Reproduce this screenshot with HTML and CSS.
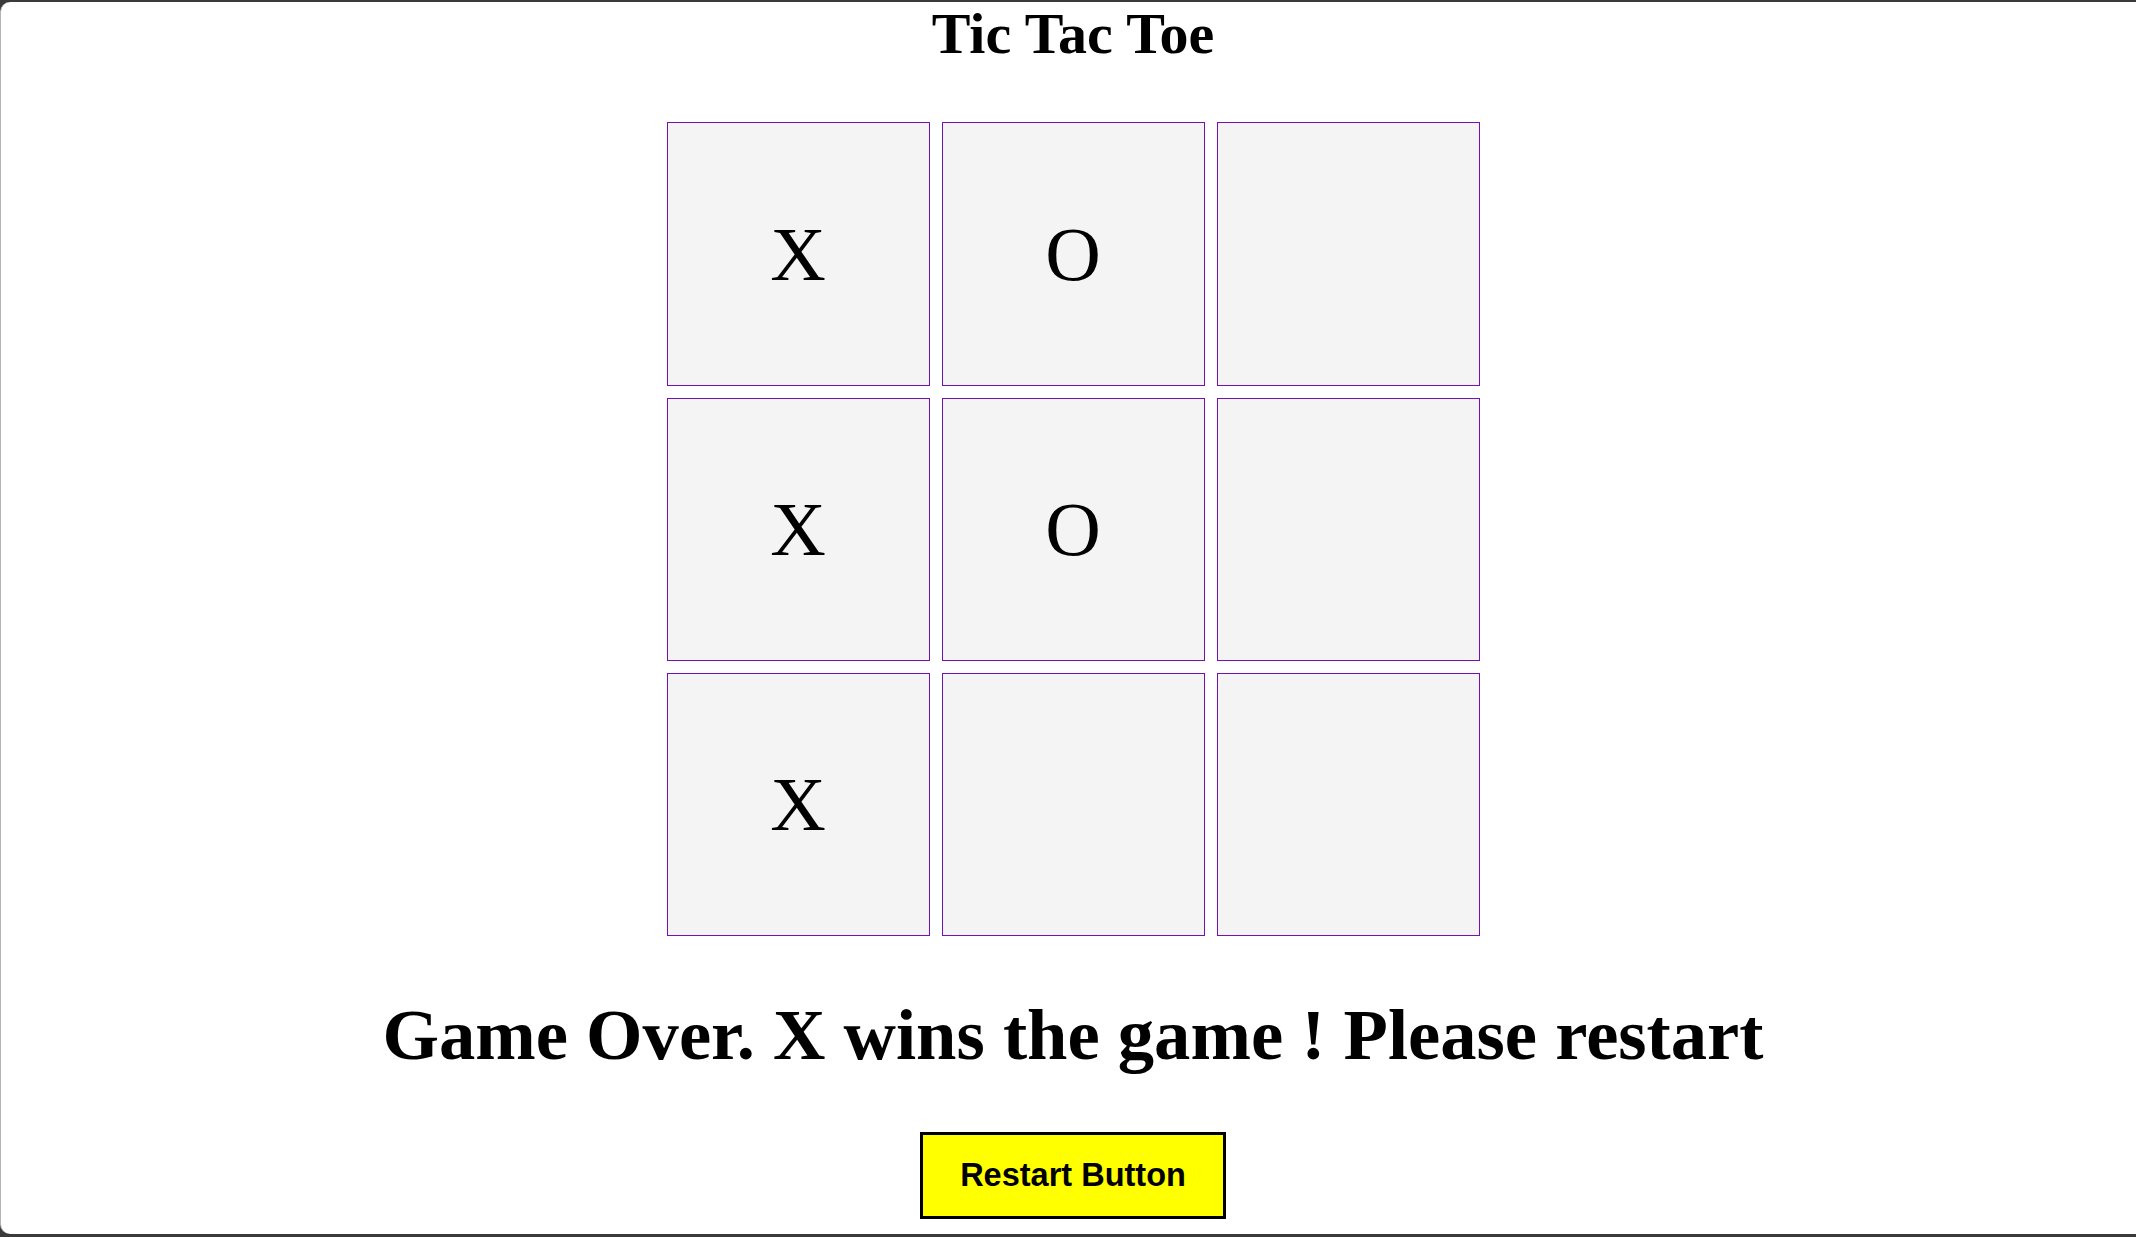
FILE: index.html
```html
<!DOCTYPE html>
<html lang="en">
<head>
<meta charset="utf-8">
<title>Tic Tac Toe</title>
<link rel="stylesheet" href="styles.css">
</head>
<body>
<div class="page">
  <h1 class="title">Tic Tac Toe</h1>
  <div class="board">
    <div class="cell">X</div>
    <div class="cell">O</div>
    <div class="cell"></div>
    <div class="cell">X</div>
    <div class="cell">O</div>
    <div class="cell"></div>
    <div class="cell">X</div>
    <div class="cell"></div>
    <div class="cell"></div>
  </div>
  <h2 class="status">Game Over. X wins the game ! Please restart</h2>
  <button class="restart">Restart Button</button>
</div>
</body>
</html>
```

FILE: styles.css
```css
html {
  background: #3a3a3a;
}
body {
  margin: 0;
  padding: 2px 0 3px 0;
}
.page {
  box-sizing: border-box;
  height: 1232px;
  background: #ffffff;
  border-left: 1px solid #b5b5b5;
  border-radius: 10px 0 0 10px;
  padding-left: 9px;
  display: flex;
  flex-direction: column;
  align-items: center;
  font-family: "Liberation Serif", "Times New Roman", serif;
  color: #000;
}
.title {
  margin: 0;
  font-size: 58px;
  line-height: 63px;
  font-weight: bold;
}
.board {
  margin-top: 57px;
  display: grid;
  grid-template-columns: repeat(3, 263px);
  grid-template-rows: 264px 263px 263px;
  column-gap: 12px;
  row-gap: 12px;
}
.cell {
  box-sizing: border-box;
  background: #f4f4f4;
  border: 1px solid #7410b4;
  display: flex;
  align-items: center;
  justify-content: center;
  font-size: 77px;
  line-height: 1;
}
.status {
  margin: 59px 0 0 0;
  font-size: 72.6px;
  line-height: 80px;
  font-weight: bold;
}
.restart {
  margin-top: 57px;
  box-sizing: border-box;
  width: 306px;
  height: 87px;
  background: #ffff00;
  border: 3px solid #000;
  font-family: "Liberation Sans", Arial, sans-serif;
  font-weight: bold;
  font-size: 32.5px;
  color: #000;
  padding: 0;
}
```
